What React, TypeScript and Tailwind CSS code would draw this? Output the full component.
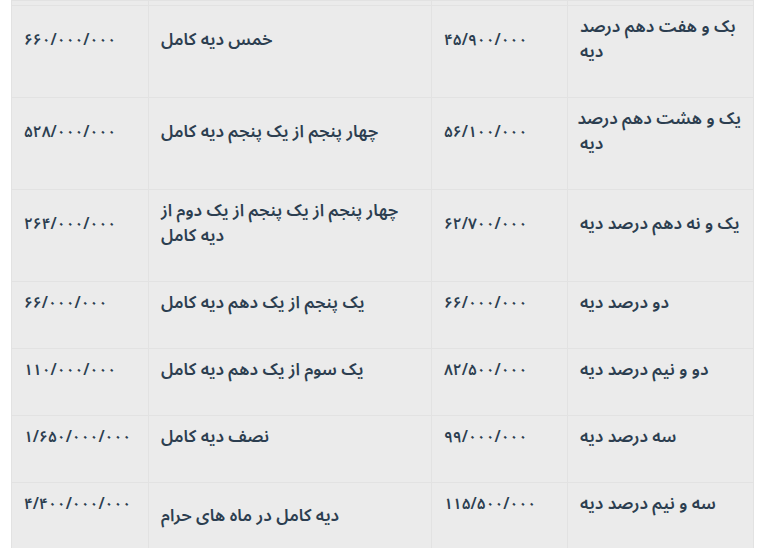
const ROWS: {
  a: string[];
  b: string;
  c: string[];
  d: string;
  plainC?: boolean;
}[] = [
  { a: ["بک و هفت دهم درصد", "دیه"], b: "۴۵/۹۰۰/۰۰۰", c: ["خمس دیه کامل"], d: "۶۶۰/۰۰۰/۰۰۰" },
  { a: ["یک و هشت دهم درصد", "دیه"], b: "۵۶/۱۰۰/۰۰۰", c: ["چهار پنجم از یک پنجم دیه کامل"], d: "۵۲۸/۰۰۰/۰۰۰" },
  { a: ["یک و نه دهم درصد دیه"], b: "۶۲/۷۰۰/۰۰۰", c: ["چهار پنجم از یک پنجم از یک دوم از", "دیه کامل"], d: "۲۶۴/۰۰۰/۰۰۰" },
  { a: ["دو درصد دیه"], b: "۶۶/۰۰۰/۰۰۰", c: ["یک پنجم از یک دهم دیه کامل"], d: "۶۶/۰۰۰/۰۰۰" },
  { a: ["دو و نیم درصد دیه"], b: "۸۲/۵۰۰/۰۰۰", c: ["یک سوم از یک دهم دیه کامل"], d: "۱۱۰/۰۰۰/۰۰۰" },
  { a: ["سه درصد دیه"], b: "۹۹/۰۰۰/۰۰۰", c: ["نصف دیه کامل"], d: "۱/۶۵۰/۰۰۰/۰۰۰" },
  { a: ["سه و نیم درصد دیه"], b: "۱۱۵/۵۰۰/۰۰۰", c: ["دیه کامل در ماه های حرام"], d: "۴/۴۰۰/۰۰۰/۰۰۰", plainC: true },
];

function Lines({ lines }: { lines: string[] }) {
  return (
    <>
      {lines.map((l, i) => (
        <span key={i} className="block whitespace-nowrap">
          {l}
        </span>
      ))}
    </>
  );
}

function Cell({ children, plain }: { children: React.ReactNode; plain?: boolean }) {
  return (
    <td className="border border-[#e2e2e2] px-[12px] py-[9px] text-left align-middle">
      {plain ? children : <p className="mb-[23px]">{children}</p>}
    </td>
  );
}

function Amount({ value }: { value: string }) {
  return (
    <span dir="ltr" className="whitespace-nowrap text-[15.5px]">
      {value}
    </span>
  );
}

export default function App() {
  return (
    <div className="h-[548px] w-[766px] overflow-hidden bg-white pl-[11px]">
      <table
        dir="rtl"
        className="w-[743px] table-fixed border-collapse bg-[#ebebeb] text-[17px] font-semibold leading-[25px] text-[#2c3e50]"
        style={{ fontFamily: '"Noto Sans Arabic", "DejaVu Sans", sans-serif' }}
      >
        <colgroup>
          <col className="w-[186px]" />
          <col className="w-[136px]" />
          <col className="w-[283px]" />
          <col className="w-[137px]" />
        </colgroup>
        <tbody>
          <tr className="h-[5px]">
            <td className="border border-[#e2e2e2] p-0" />
            <td className="border border-[#e2e2e2] p-0" />
            <td className="border border-[#e2e2e2] p-0" />
            <td className="border border-[#e2e2e2] p-0" />
          </tr>
          {ROWS.map((r, i) => (
            <tr key={i}>
              <Cell>
                <Lines lines={r.a} />
              </Cell>
              <Cell>
                <Amount value={r.b} />
              </Cell>
              <Cell plain={r.plainC}>
                <Lines lines={r.c} />
              </Cell>
              <Cell>
                <Amount value={r.d} />
              </Cell>
            </tr>
          ))}
        </tbody>
      </table>
    </div>
  );
}
